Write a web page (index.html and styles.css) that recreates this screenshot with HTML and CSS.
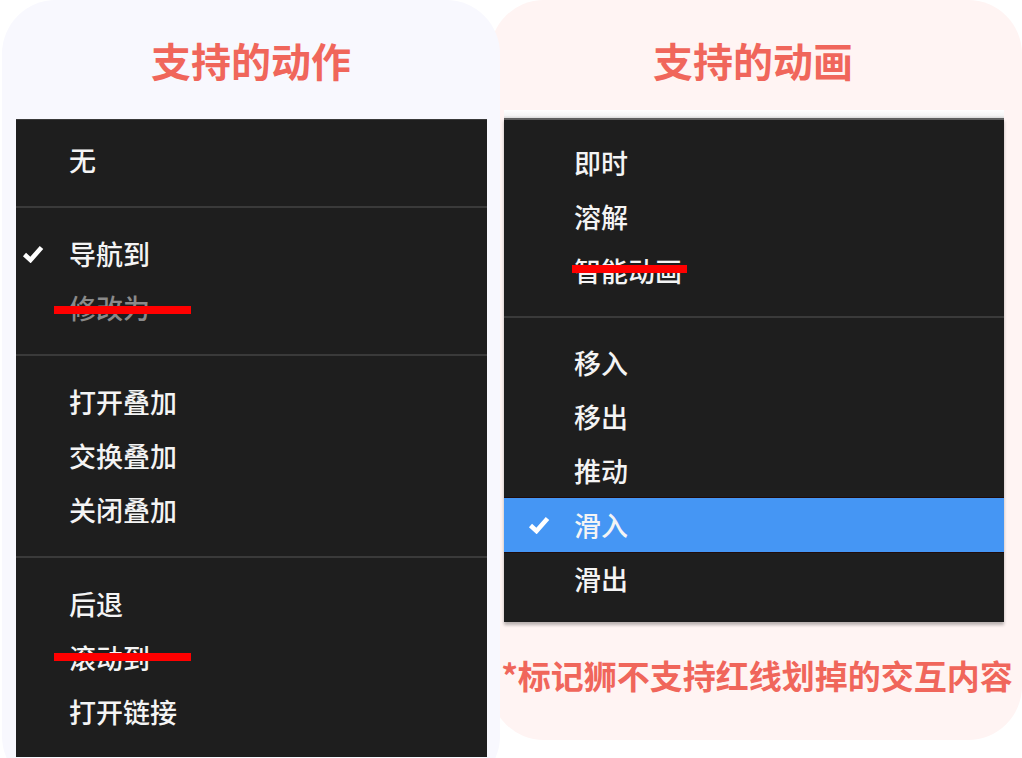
FILE: index.html
```html
<!DOCTYPE html>
<html lang="zh-CN">
<head>
<meta charset="utf-8">
<title>支持的动作与动画</title>
<link rel="stylesheet" href="styles.css">
</head>
<body>
<div class="page">
  <section class="panel panel-actions">
    <h2 class="title">支持的动作</h2>
    <div class="menu menu-actions">
      <div class="group">
        <div class="item"><span class="mark"></span><span class="label">无</span></div>
      </div>
      <div class="sep"></div>
      <div class="group">
        <div class="item"><span class="mark"><svg class="check" viewBox="0 0 22 18" width="22" height="18"><polyline points="2.5,9.5 8.5,15 19.5,2.5" /></svg></span><span class="label">导航到</span></div>
        <div class="item"><span class="mark"></span><span class="label is-disabled strike strike-modify">修改为</span></div>
      </div>
      <div class="sep"></div>
      <div class="group">
        <div class="item"><span class="mark"></span><span class="label">打开叠加</span></div>
        <div class="item"><span class="mark"></span><span class="label">交换叠加</span></div>
        <div class="item"><span class="mark"></span><span class="label">关闭叠加</span></div>
      </div>
      <div class="sep"></div>
      <div class="group">
        <div class="item"><span class="mark"></span><span class="label">后退</span></div>
        <div class="item"><span class="mark"></span><span class="label strike strike-scroll">滚动到</span></div>
        <div class="item"><span class="mark"></span><span class="label">打开链接</span></div>
      </div>
    </div>
  </section>

  <section class="panel panel-anims">
    <h2 class="title">支持的动画</h2>
    <div class="menu-strip"></div>
    <div class="menu menu-anims">
      <div class="group">
        <div class="item"><span class="mark"></span><span class="label">即时</span></div>
        <div class="item"><span class="mark"></span><span class="label">溶解</span></div>
        <div class="item"><span class="mark"></span><span class="label strike strike-smart">智能动画</span></div>
      </div>
      <div class="sep"></div>
      <div class="group">
        <div class="item"><span class="mark"></span><span class="label">移入</span></div>
        <div class="item"><span class="mark"></span><span class="label">移出</span></div>
        <div class="item"><span class="mark"></span><span class="label">推动</span></div>
        <div class="item is-selected"><span class="mark"><svg class="check" viewBox="0 0 22 18" width="22" height="18"><polyline points="2.5,9.5 8.5,15 19.5,2.5" /></svg></span><span class="label">滑入</span></div>
        <div class="item"><span class="mark"></span><span class="label">滑出</span></div>
      </div>
    </div>
    <p class="note">*标记狮不支持红线划掉的交互内容</p>
  </section>
</div>
</body>
</html>
```

FILE: styles.css
```css
html, body {
  margin: 0;
  padding: 0;
  background: #ffffff;
  overflow: hidden;
  height: 758px;
}

body {
  font-family: "Noto Sans CJK SC", "Noto Sans", sans-serif;
}

.page {
  display: flex;
  align-items: flex-start;
  width: 1022px;
  height: 758px;
}

.panel {
  display: flex;
  flex-direction: column;
  box-sizing: border-box;
}

.panel-actions {
  margin-left: 2px;
  width: 498px;
  height: 790px;
  border-radius: 54px;
  background: #f8f8fe;
  z-index: 2;
  align-items: flex-start;
}

.panel-anims {
  margin-left: -10px;
  width: 532px;
  height: 740px;
  border-radius: 54px;
  background: #fff4f3;
  z-index: 1;
  align-items: flex-start;
}

.title {
  margin: 0;
  padding-top: 36px;
  align-self: stretch;
  text-align: center;
  font-size: 40px;
  line-height: 48px;
  font-weight: 700;
  color: #f0665b;
}

.panel-anims .title {
  padding-right: 6px;
}

.menu {
  background: #1e1e1e;
  color: #f4f4f4;
  font-size: 27px;
  font-weight: 500;
  box-sizing: border-box;
}

.menu-actions {
  margin: 35px 0 0 14px;
  width: 471px;
  border-top: 1px solid #3a3a3a;
  padding: 13px 0 16px 6px;
  height: 638px;
}

.menu-strip {
  margin: 26px 0 0 14px;
  width: 500px;
  height: 8px;
  background: linear-gradient(#ffffff, #f4f4f4 70%, #d8d8d8);
}

.menu-anims {
  margin-left: 14px;
  width: 500px;
  border-top: 2px solid #5e5e5e;
  padding: 16px 0 16px 0;
  box-shadow: 0 3px 3px rgba(0, 0, 0, 0.28);
}

.group {
  display: flex;
  flex-direction: column;
}

.item {
  display: flex;
  align-items: center;
  height: 54px;
  line-height: 54px;
}

.menu-anims .item {
  padding-left: 24px;
}

.mark {
  display: flex;
  align-items: center;
  width: 47px;
  height: 54px;
  flex: none;
}

.menu-anims .mark {
  width: 46px;
}

.check {
  display: block;
  fill: none;
  stroke: #ffffff;
  stroke-width: 4.6;
  stroke-linecap: butt;
  stroke-linejoin: miter;
}

.label {
  position: relative;
  white-space: nowrap;
}

.label.is-disabled {
  color: #8a8a8a;
}

.item.is-selected {
  background: #4596f4;
  box-shadow: 0 -1px 0 #200c0c, 0 1px 0 #200c0c;
}

.sep {
  height: 2px;
  background: #3a3a3a;
  margin: 19px 0;
}

.menu-actions .sep {
  margin-left: -6px;
}

.menu-anims .sep {
  margin: 18px 0;
}

.strike::after {
  content: "";
  position: absolute;
  height: 8px;
  background: #ff0000;
}

.strike-modify::after {
  left: -15px;
  width: 137px;
  top: 25px;
}

.strike-scroll::after {
  left: -15px;
  width: 137px;
  top: 22px;
}

.strike-smart::after {
  left: -2px;
  width: 115px;
  top: 21px;
}

.note {
  margin: 33px 0 0 0;
  align-self: stretch;
  text-align: center;
  font-size: 33px;
  line-height: 40px;
  font-weight: 700;
  color: #f0665b;
  white-space: nowrap;
  padding-left: 2px;
}
```
